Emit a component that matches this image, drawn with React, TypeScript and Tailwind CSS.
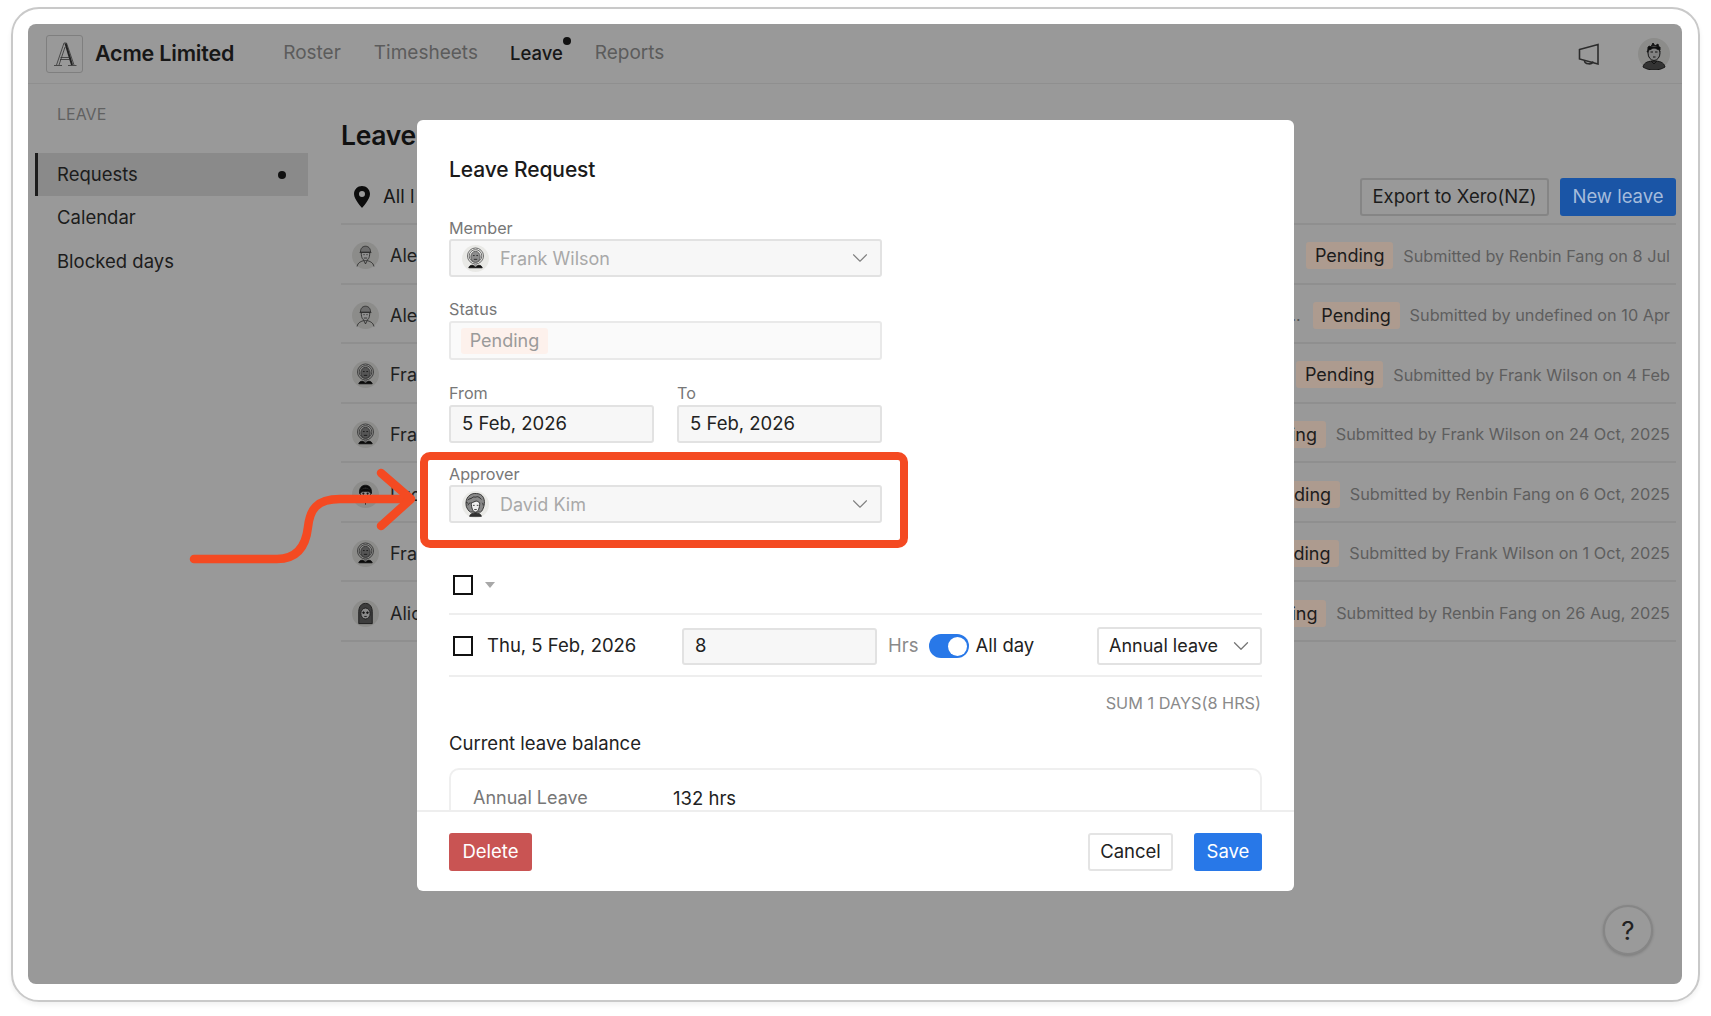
import React from "react";
import { ChevronDown } from "lucide-react";

type Kind = "frank" | "alex" | "lucy" | "alice" | "david" | "user";

function Avatar({ kind, size = 27, dim = true }: { kind: Kind; size?: number; dim?: boolean }) {
  return (
    <svg viewBox="0 0 32 32" width={size} height={size} className={dim ? "shrink-0 brightness-[.6]" : "shrink-0"}>
      <circle cx="16" cy="16" r="16" fill="#e9e9e6" />
      {kind === "frank" && (
        <g fill="none" stroke="#555" strokeWidth="1">
          <circle cx="16" cy="13" r="9.500" />
          <circle cx="16" cy="13" r="7.500" />
          <ellipse cx="16" cy="14" rx="5.500" ry="6.500" fill="#8d8d8d" />
          <path d="M13 12.500h2M17 12.500h2M14 17h4" stroke="#222" />
          <path d="M8 27c1-3 3-3 5-3l3 2 3-2c2 0 4 0 5 3z" fill="#111" stroke="#111" />
          <path d="M14 22h4v3h-4z" fill="#999" stroke="none" />
        </g>
      )}
      {kind === "alex" && (
        <g fill="none" stroke="#444" strokeWidth="1">
          <path d="M10 12c0-5 3-7 6-7s6 2 6 7z" fill="#b5b5b5" />
          <path d="M9 12.500h14" />
          <path d="M11 13c0 6 2 9 5 9s5-3 5-9" fill="#eee" />
          <path d="M13.500 15h1.500M17 15h1.500M14 19h4" />
          <path d="M6 29c1-5 5-6 8-7l2 4 2-4c3 1 7 2 8 7" />
        </g>
      )}
      {kind === "lucy" && (
        <g stroke="#222" strokeWidth="1">
          <path d="M9 15c-1-7 3-10 7-10s8 3 7 10c-1-3-3-4-7-4s-6 1-7 4z" fill="#111" />
          <ellipse cx="16" cy="15" rx="6" ry="7" fill="#f2f2f2" />
          <path d="M9 14c1-4 4-5 7-5s6 1 7 5c-3-2-11-2-14 0z" fill="#111" />
          <circle cx="13.500" cy="15" r=".8" fill="#111" />
          <circle cx="18.500" cy="15" r=".8" fill="#111" />
          <path d="M14 19h4M16 22v6" fill="none" />
        </g>
      )}
      {kind === "alice" && (
        <g stroke="#222" strokeWidth="1">
          <path d="M8 28V14C8 8 11 4 16 4s8 4 8 10v14z" fill="#666" />
          <ellipse cx="16" cy="16" rx="5.500" ry="6.500" fill="#e6e6e6" />
          <circle cx="13.700" cy="15" r="1" fill="#222" />
          <circle cx="18.300" cy="15" r="1" fill="#222" />
          <path d="M14.500 19.500h3" fill="none" />
        </g>
      )}
      {kind === "david" && (
        <g stroke="#222" strokeWidth="1">
          <path d="M5 18C3 8 10 2 17 3c8 0 11 7 9 15-1 3-2 6-4 7H10c-2-1-4-4-5-7z" fill="#888" />
          <path d="M7 11c2-3 3-1 5-3s3 0 5-1 4 1 6 3M7 17c1-2 2-3 3-3M5 14c1-1 2 0 2 1M24 14c1 1 1 2 1 3" fill="none" />
          <path d="M11 14c2 0 4-2 6-2s3 2 4 2c0 6-2 11-5 11s-5-5-5-11z" fill="#f0f0f0" />
          <path d="M13 17h2M17.500 17h2M14.500 22h3" fill="none" />
          <path d="M9 30c1-3 3-4 7-4s6 1 7 4z" fill="#333" />
        </g>
      )}
      {kind === "user" && (
        <g stroke="#222" strokeWidth="1">
          <path d="M5 29c1-5 6-6 11-6s10 1 11 6c-3 2-7 3-11 3s-8-1-11-3z" fill="#555" />
          <path d="M10 12l1-4 2 1 2-4 2 3 3-2 1 5 1 3H9z" fill="#111" />
          <ellipse cx="16" cy="15" rx="6" ry="7.500" fill="#d8d8d8" />
          <path d="M10 12c3 0 4-2 6-2s4 2 6 2l0-3-12 0z" fill="#111" />
          <path d="M12.500 14h2.500M17 14h2.500M15 19h2.500M13 23l3 3 3-3" fill="none" />
        </g>
      )}
    </svg>
  );
}

function Logo() {
  return (
    <svg viewBox="0 0 24 26" width="24" height="26" fill="none" stroke="#333" strokeWidth=".8">
      <path d="M3.500 24 11 2h2.500l7.500 22" />
      <path d="M6 24 12 6" />
      <path d="M12.500 2.500 19 24" strokeWidth="2" stroke="#222" />
      <path d="M7.500 16.500h9" />
      <path d="M7 18.500h10" />
      <path d="M1 24.500h8M15 24.500h8.500" />
    </svg>
  );
}

const rows: { kind: Kind; name: string; by: string; date: string; note?: boolean }[] = [
  { kind: "alex", name: "Ale", by: "Renbin Fang", date: "8 Jul" },
  { kind: "alex", name: "Ale", by: "undefined", date: "10 Apr", note: true },
  { kind: "frank", name: "Fra", by: "Frank Wilson", date: "4 Feb" },
  { kind: "frank", name: "Fra", by: "Frank Wilson", date: "24 Oct, 2025" },
  { kind: "lucy", name: "Luc", by: "Renbin Fang", date: "6 Oct, 2025" },
  { kind: "frank", name: "Fra", by: "Frank Wilson", date: "1 Oct, 2025" },
  { kind: "alice", name: "Alic", by: "Renbin Fang", date: "26 Aug, 2025" },
];

function Label({ children }: { children: React.ReactNode }) {
  return <div className="h-[20px] pb-[2px] text-[16.200px] leading-[18px] text-[#777]">{children}</div>;
}

function PersonSelect({ kind, name }: { kind: Kind; name: string }) {
  return (
    <div className="flex h-[38px] items-center rounded-[3px] border-2 border-[#e2e2e2] bg-[#f7f7f7] pl-[11px] pr-[7px]">
      <Avatar kind={kind} dim={false} />
      <span className="ml-[11px] text-[18px] text-[#a9a9a9]">{name}</span>
      <ChevronDown className="ml-auto text-[#808080]" size={26} strokeWidth={1} />
    </div>
  );
}

function Checkbox() {
  return <div className="h-[20px] w-[20px] shrink-0 border-2 border-[#111]" />;
}

export default function App() {
  return (
    <div className="relative h-[1016px] w-[1711px] overflow-hidden bg-white pl-[11px] pt-[7px] font-['Inter',sans-serif]">
      <div className="h-[995px] w-[1689px] rounded-[28px] border-2 border-[#c9c9c9] pb-[16px] pl-[15px] pr-[16px] pt-[15px] shadow-[0_3px_5px_rgba(0,0,0,0.06)]">
        <div className="relative h-[960px] w-[1654px] overflow-hidden rounded-[8px] bg-[#999999]">
          <header className="flex h-[60px] items-center border-b border-[#8f8f8f] pl-[18px] pr-[12px]">
            <div className="flex h-[38px] w-[37px] items-center justify-center rounded-[3px] border border-[#7f7f7f]">
              <Logo />
            </div>
            <span className="ml-[12px] text-[21.500px] font-semibold tracking-[-0.2px] text-[#171717]">Acme Limited</span>
            <nav className="ml-[49px] flex items-center text-[19px] text-[#5c5c5c]">
              <span>Roster</span>
              <span className="ml-[33px]">Timesheets</span>
              <span className="relative ml-[32px] text-[18.500px] font-medium text-[#171717]">
                Leave
                <span className="absolute -right-[8px] top-[-3px] h-[8px] w-[8px] rounded-full bg-[#111]" />
              </span>
              <span className="ml-[32px]">Reports</span>
            </nav>
            <div className="ml-auto flex items-center gap-[38px]">
              <svg viewBox="0 0 22 22" width="22" height="22" fill="none" stroke="#2c2c2c" strokeWidth="1.600">
                <path d="M1.500 6.500 20 1.500V21L1.500 16z" />
                <path d="M6.500 17.500c0 4 7.500 4.500 8.500 1" />
              </svg>
              <Avatar kind="user" size={32} />
            </div>
          </header>
          <div className="flex">
            <aside className="w-[280px] pl-[7px] pt-[20px]">
              <div className="pl-[22px] text-[16px] leading-[20px] text-[#616161]">LEAVE</div>
              <div className="mt-[29px] text-[18.500px] text-[#1c1c1c]">
                <div className="flex h-[43px] w-[273px] items-center justify-between border-l-[3px] border-[#1c1c1c] bg-[#8a8a8a] pl-[19px] pr-[22px]">
                  <span>Requests</span>
                  <span className="h-[8px] w-[8px] rounded-full bg-[#111]" />
                </div>
                <div className="flex h-[44px] items-center pl-[22px]">Calendar</div>
                <div className="flex h-[43px] items-center pl-[22px]">Blocked days</div>
              </div>
            </aside>
            <main className="ml-[33px] w-[1335px] pt-[33px]">
              <h1 className="text-[26.500px] font-semibold leading-[36px] tracking-[-0.3px] text-[#111]">Leave</h1>
              <div className="mt-[25px] flex h-[47px] items-start justify-between border-b-2 border-[#8f8f8f]">
                <div className="flex h-[38px] items-center pl-[13px] text-[18.500px] text-[#171717]">
                  <svg viewBox="0 0 16 22" width="16" height="22" fill="#0c0c0c">
                    <path fillRule="evenodd" d="M8 0C3.600 0 0 3.500 0 8c0 5.500 8 14 8 14s8-8.500 8-14c0-4.500-3.600-8-8-8zm0 11a3 3 0 1 1 0-6 3 3 0 0 1 0 6z" />
                  </svg>
                  <span className="ml-[13px]">All l</span>
                </div>
                <div className="flex gap-[11px]">
                  <div className="flex h-[38px] w-[189px] items-center justify-center rounded-[3px] border-2 border-[#858585] text-[18.500px] text-[#1c1c1c]">Export to Xero(NZ)</div>
                  <div className="flex h-[38px] w-[116px] items-center justify-center rounded-[3px] bg-[#1a55a6] text-[18.500px] text-[#a5bcdc]">New leave</div>
                </div>
              </div>
              {rows.map((r, i) => (
                <div key={i} className="flex h-[59.570px] items-center justify-between border-b-2 border-[#8f8f8f] pl-[11px] pr-[6px] pt-[4px]">
                  <div className="flex items-center">
                    <Avatar kind={r.kind} />
                    <span className="ml-[11px] text-[18px] text-[#1f1f1f]">{r.name}</span>
                  </div>
                  <div className="flex items-center">
                    {r.note && <span className="mr-[12px] text-[16px] text-[#555]">..</span>}
                    <span className="flex h-[27px] w-[87px] items-center justify-center rounded-[3px] bg-[#ad9b8f] text-[18px] text-[#1c1c1c]">Pending</span>
                    <span className="ml-[10px] text-[16.250px] text-[#5e5e5e]">Submitted by {r.by} on {r.date}</span>
                  </div>
                </div>
              ))}
            </main>
          </div>
          <div className="absolute left-[1575px] top-[881px] flex h-[50px] w-[50px] items-center justify-center rounded-full border-2 border-[#868686] bg-[#9a9a9a] text-[26px] text-[#222] shadow-[0_1px_3px_rgba(0,0,0,0.2)]">?</div>
        </div>
      </div>

      <div className="absolute left-[417px] top-[120px] flex h-[771px] w-[877px] flex-col rounded-[6px] bg-white">
        <div className="h-[690px] overflow-hidden px-[32px] pt-[36px]">
          <h2 className="text-[21px] font-medium leading-[28px] tracking-[-0.1px] text-[#1a1a1a]">Leave Request</h2>
          <div className="w-[433px]">
            <div className="mt-[35px]"><Label>Member</Label></div>
            <PersonSelect kind="frank" name="Frank Wilson" />
            <div className="mt-[23px]"><Label>Status</Label></div>
            <div className="mt-[1px] flex h-[39px] items-center rounded-[3px] border-2 border-[#e9e9e9] bg-[#fafafa] pl-[10px]">
              <span className="flex h-[26px] w-[87px] items-center justify-center rounded-[3px] bg-[#fdf1ec] text-[18px] text-[#9a9a9a]">Pending</span>
            </div>
            <div className="mt-[24px] flex gap-[23px]">
              {["From", "To"].map((l) => (
                <div key={l} className="w-[205px]">
                  <Label>{l}</Label>
                  <div className="mt-[1px] flex h-[38px] items-center rounded-[3px] border-2 border-[#e2e2e2] bg-[#f7f7f7] pl-[11px] text-[18.500px] text-[#222]">5 Feb, 2026</div>
                </div>
              ))}
            </div>
            <div className="mt-[22px]"><Label>Approver</Label></div>
            <PersonSelect kind="david" name="David Kim" />
          </div>
          <div className="mt-[52px] flex items-center border-b-2 border-[#eeeeee] pb-[18px] pl-[4px]">
            <Checkbox />
            <svg viewBox="0 0 10 6" width="10" height="6" className="ml-[12px]"><path d="M0 0h10L5 6z" fill="#a8a8a8" /></svg>
          </div>
          <div className="flex h-[62px] items-center border-b-2 border-[#eeeeee] pl-[4px] pt-[2px] text-[18.500px] text-[#222]">
            <Checkbox />
            <span className="ml-[14px] w-[195px]">Thu, 5 Feb, 2026</span>
            <div className="flex h-[37px] w-[195px] items-center rounded-[3px] border-2 border-[#e2e2e2] bg-[#f7f7f7] pl-[11px]">8</div>
            <span className="ml-[11px] text-[#8a8a8a]">Hrs</span>
            <span className="ml-[11px] flex h-[24px] w-[40px] items-center justify-end rounded-full bg-[#2878e8] pr-[2px]">
              <span className="h-[19px] w-[19px] rounded-full bg-white" />
            </span>
            <span className="ml-[6px]">All day</span>
            <div className="ml-auto flex h-[38px] w-[165px] items-center justify-between rounded-[3px] border-2 border-[#e2e2e2] pb-[1px] pl-[10px] pr-[6px] text-[18px]">
              <span>Annual leave</span>
              <ChevronDown className="text-[#777]" size={26} strokeWidth={1.200} />
            </div>
          </div>
          <div className="mt-[16px] pr-[1px] text-right text-[16.300px] leading-[20px] text-[#8a8a8a]">SUM 1 DAYS(8 HRS)</div>
          <div className="mt-[18px] text-[18.500px] leading-[24px] text-[#222]">Current leave balance</div>
          <div className="mt-[13px] flex h-[80px] rounded-[10px] border-2 border-[#efefef] pl-[22px] pt-[16px] leading-[24px]">
            <span className="w-[200px] text-[18px] text-[#777]">Annual Leave</span>
            <span className="text-[18.500px] text-[#222]">132 hrs</span>
          </div>
        </div>
        <div className="flex flex-1 items-center justify-between border-t-2 border-[#eeeeee] px-[32px] text-[18.500px]">
          <div className="flex h-[38px] w-[83px] items-center justify-center rounded-[3px] bg-[#c95453] text-white">Delete</div>
          <div className="flex gap-[21px]">
            <div className="flex h-[38px] w-[85px] items-center justify-center rounded-[3px] border-2 border-[#e4e4e4] text-[#222]">Cancel</div>
            <div className="flex h-[38px] w-[68px] items-center justify-center rounded-[3px] bg-[#2878e8] text-white">Save</div>
          </div>
        </div>
      </div>

      <div className="absolute left-[420px] top-[452px] h-[96px] w-[488px] rounded-[10px] border-[8px] border-[#f44a22]" />
      <svg className="absolute left-0 top-0" width="1711" height="1016" fill="none" stroke="#f44a22" strokeWidth="8.500" strokeLinecap="round" strokeLinejoin="round">
        <path d="M194 559H277C298 559 306 545 308 527C310 510 316 499 340 499H408" />
        <path d="M381 473 411 499 381 526" />
      </svg>
    </div>
  );
}
